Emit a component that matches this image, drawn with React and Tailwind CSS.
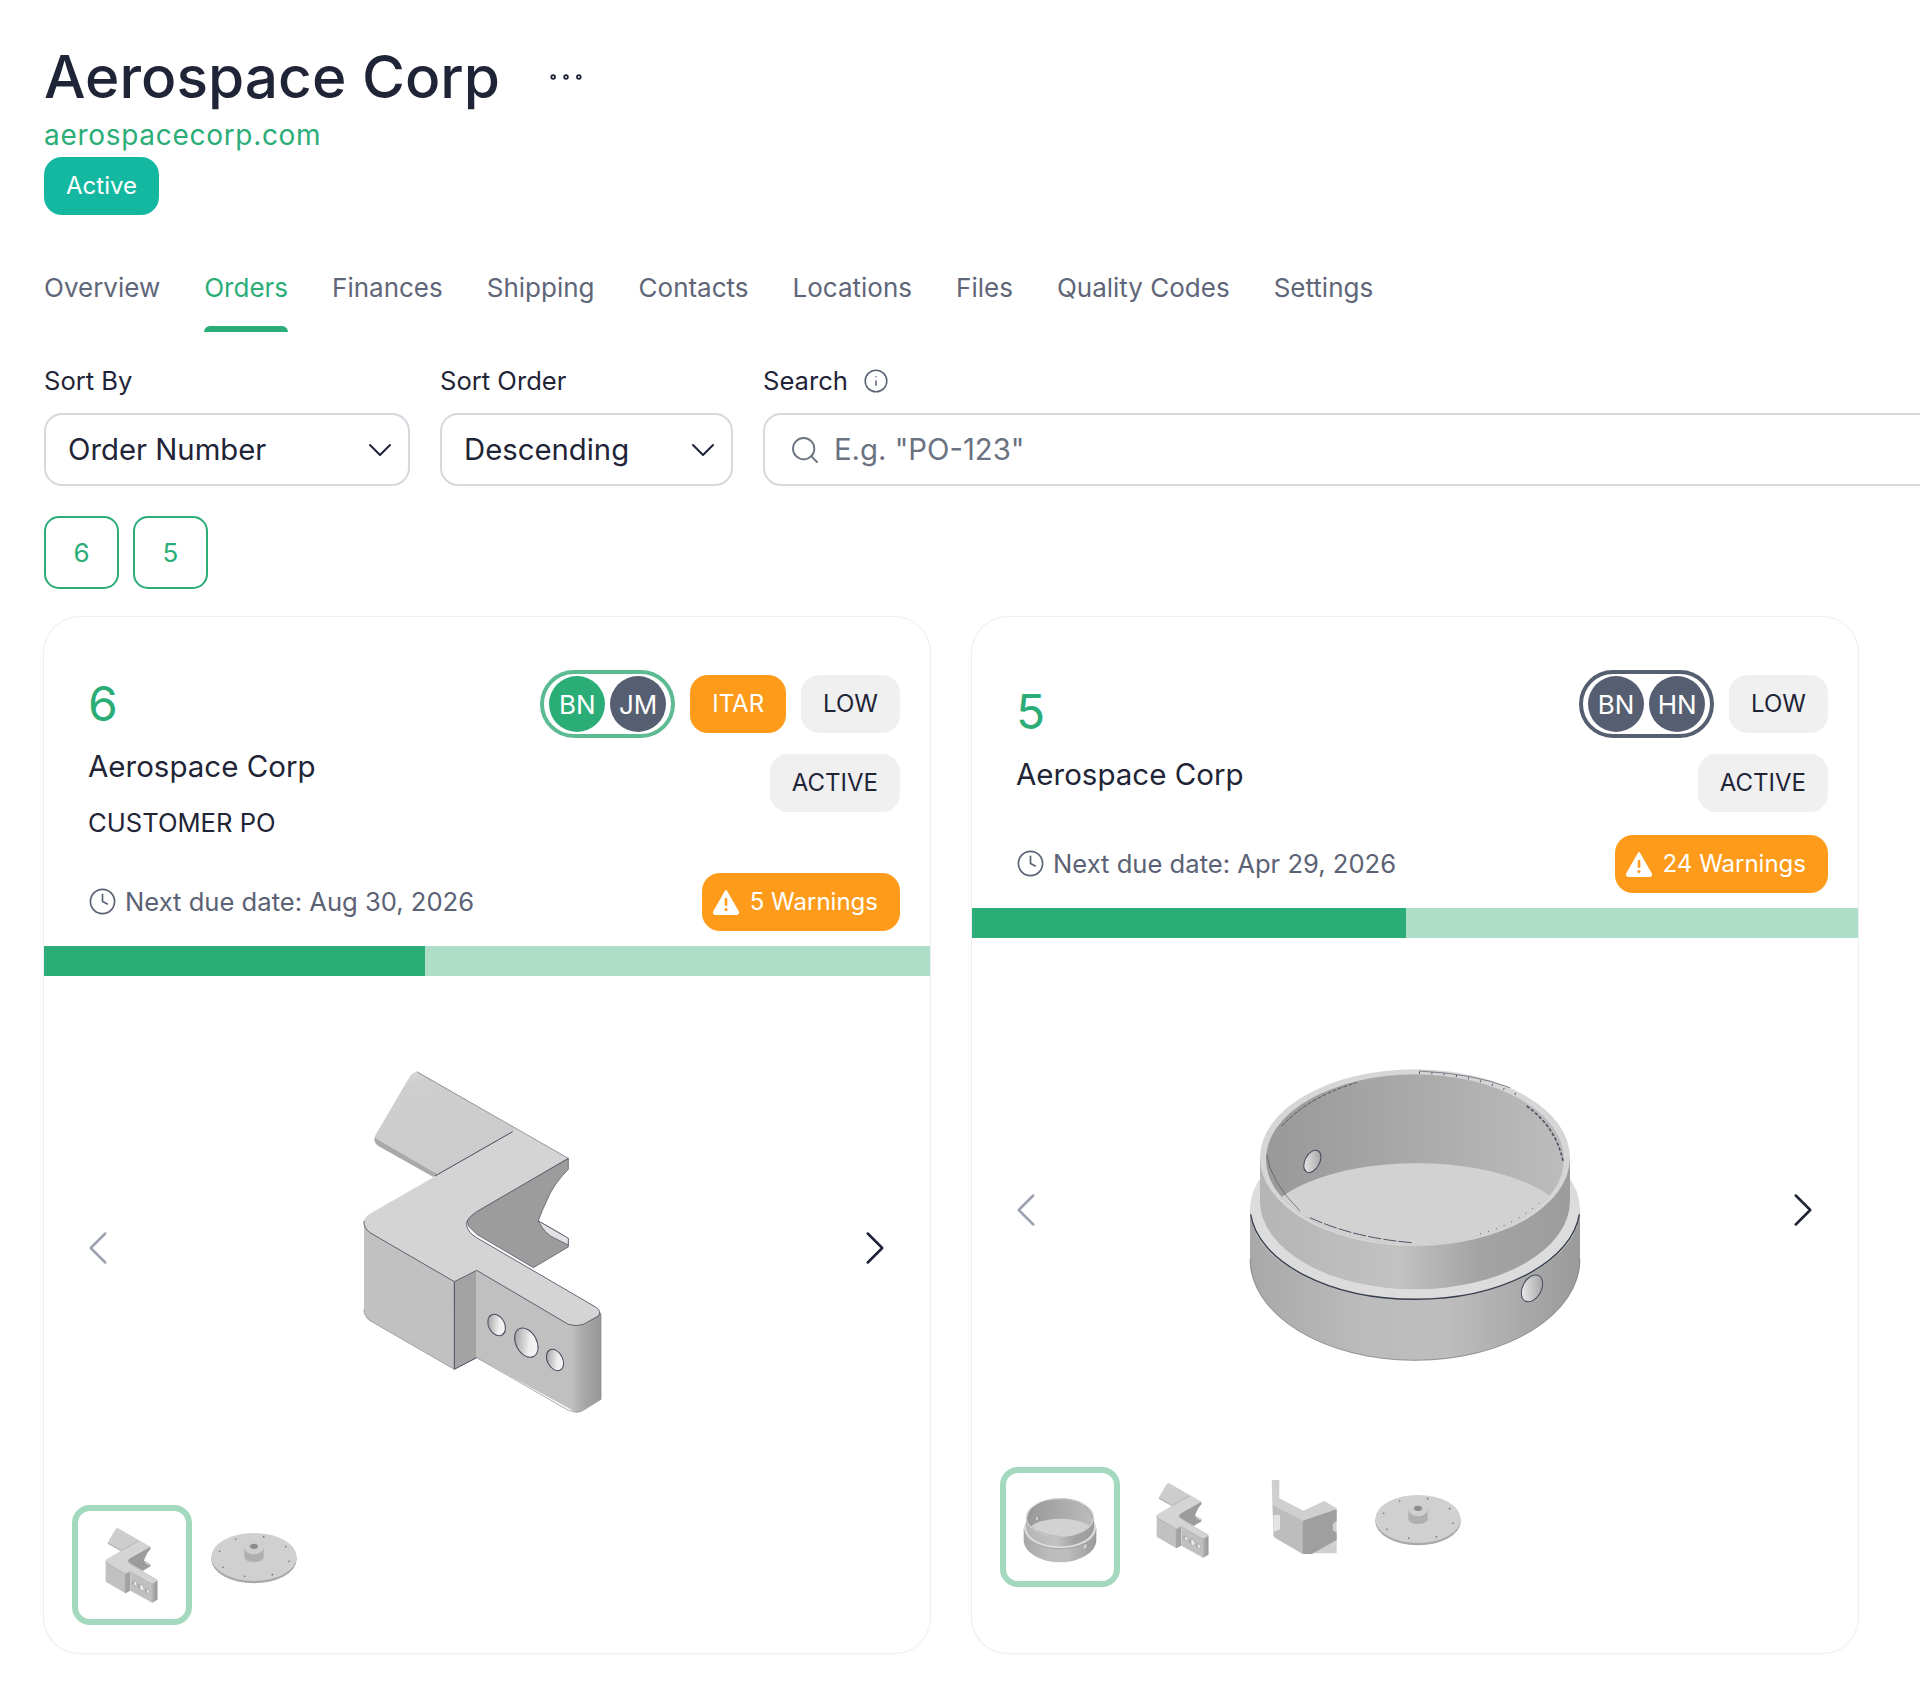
import { ChevronDown, ChevronLeft, ChevronRight, Clock, Ellipsis, Info, Search } from 'lucide-react'

const tabs = ['Overview', 'Orders', 'Finances', 'Shipping', 'Contacts', 'Locations', 'Files', 'Quality Codes', 'Settings']

const Badge = ({ children, className = '' }) => (
  <span className={`flex h-[58px] items-center rounded-[18px] px-[22px] text-[24px] ${className}`}>{children}</span>
)

const Avatar = ({ label, green }) => (
  <span className={`flex h-[56px] w-[56px] items-center justify-center rounded-full text-[26px] text-white ${green ? 'bg-[#2bad78]' : 'bg-[#565f72]'}`}>
    {label}
  </span>
)

const WarningIcon = () => (
  <svg width="28" height="26" viewBox="0 0 28 26">
    <path d="M14 2 L26 23 Q26.500 25 24.500 25 H3.500 Q1.500 25 2 23 Z" fill="#fff" stroke="#fff" strokeWidth="2" strokeLinejoin="round" />
    <rect x="12.700" y="9" width="2.600" height="8" rx="1" fill="#fe9b1b" />
    <circle cx="14" cy="20.500" r="1.600" fill="#fe9b1b" />
  </svg>
)

// isometric bracket, coordinates taken from the 3x crop
const PartShape = ({ width, height }) => (
  <svg width={width} height={height} viewBox="0 0 1002 1200">
    <defs>
      <linearGradient id="endFace" x1="0" y1="0" x2="1" y2="0">
        <stop offset="0" stopColor="#c2c2c2" />
        <stop offset="0.5" stopColor="#a6a6a6" />
        <stop offset="1" stopColor="#989898" />
      </linearGradient>
      <linearGradient id="holeFill" x1="0" y1="0" x2="1" y2="1">
        <stop offset="0" stopColor="#8f8f8f" />
        <stop offset="0.6" stopColor="#eeeeee" />
        <stop offset="1" stopColor="#fafafa" />
      </linearGradient>
      <linearGradient id="flangeFill" x1="0" y1="0" x2="0.4" y2="1">
        <stop offset="0" stopColor="#e0e0e0" />
        <stop offset="0.2" stopColor="#cecece" />
        <stop offset="1" stopColor="#cccccc" />
      </linearGradient>
    </defs>
    <path d="M272 102 Q285 88 298 95 L600 270 L345 405 L175 312 Q158 300 165 285 Z" fill="url(#flangeFill)" />
    <path d="M165 290 Q160 305 175 315 L340 408 L352 400 L180 300 Z" fill="#a9a9a9" />
    <path d="M745 352 L745 385 Q700 430 680 480 Q665 510 655 540 L700 565 L745 592 L745 618 L640 680 L470 580 L445 555 L440 525 Z" fill="#9c9c9c" stroke="#444c5c" strokeWidth="2" />
    <path d="M655 540 L745 592 L745 612 L705 592 Q675 580 655 540 Z" fill="#e2e2e2" stroke="#444c5c" strokeWidth="2" />
    <path d="M132 545 L403 722 V985 L148 838 Q132 825 132 805 Z" fill="#c1c1c1" />
    <path d="M403 722 L470 688 V950 L403 985 Z" fill="#a3a3a3" />
    <path d="M470 688 L760 855 L772 1116 L470 950 Z" fill="#c0c0c0" />
    <path d="M750 850 Q775 858 800 845 L843 815 V1075 L785 1110 Q770 1118 750 1105 Z" fill="url(#endFace)" />
    <path d="M578 272 L590 264 L745 352 L470 512 Q435 535 440 555 Q445 575 470 590 L830 800 Q845 812 835 825 L790 850 Q770 858 745 850 L470 688 L403 722 L150 575 Q130 560 132 540 Q135 525 155 515 Z" fill="#d4d4d4" />
    <path d="M745 352 L470 512 Q435 535 440 555 Q445 575 470 590 L830 800 Q845 812 835 825 L790 850 Q770 858 745 850 L470 688 L403 722 L150 575 Q130 560 132 540" fill="none" stroke="#444c5c" strokeWidth="2.500" strokeLinejoin="round" />
    <path d="M403 722 V985 L470 950 M578 272 L345 405" fill="none" stroke="#444c5c" strokeWidth="3" />
    <path d="M290 92 L745 352" fill="none" stroke="#666d7c" strokeWidth="2" />
    <path d="M132 805 Q132 825 148 838 L403 985 M470 950 L740 1105 Q770 1120 790 1108 L843 1075 V815" fill="none" stroke="#7c8290" strokeWidth="2" />
    <ellipse cx="530" cy="852" rx="24" ry="34" transform="rotate(-28 530 852)" fill="url(#holeFill)" stroke="#444c5c" strokeWidth="3" />
    <ellipse cx="619" cy="905" rx="31" ry="47" transform="rotate(-28 619 905)" fill="url(#holeFill)" stroke="#444c5c" strokeWidth="3" />
    <ellipse cx="705" cy="957" rx="23" ry="34" transform="rotate(-28 705 957)" fill="url(#holeFill)" stroke="#444c5c" strokeWidth="3" />
  </svg>
)

const RingShape = ({ width, height }) => (
  <svg width={width} height={height} viewBox="-15 -24 1200 1020">
    <defs>
      <linearGradient id="lowerWall" x1="0" y1="0" x2="1" y2="0">
        <stop offset="0" stopColor="#a8a8a8" />
        <stop offset="0.35" stopColor="#bcbcbc" />
        <stop offset="0.6" stopColor="#bdbdbd" />
        <stop offset="1" stopColor="#9a9a9a" />
      </linearGradient>
      <linearGradient id="upperWall" x1="0" y1="0" x2="1" y2="0">
        <stop offset="0" stopColor="#b5b5b5" />
        <stop offset="0.45" stopColor="#c2c2c2" />
        <stop offset="0.7" stopColor="#a4a4a4" />
        <stop offset="1" stopColor="#9c9c9c" />
      </linearGradient>
      <linearGradient id="innerWall" x1="0" y1="0" x2="1" y2="0">
        <stop offset="0" stopColor="#999999" />
        <stop offset="0.4" stopColor="#a6a6a6" />
        <stop offset="1" stopColor="#bcbcbc" />
      </linearGradient>
      <linearGradient id="ringHole" x1="0" y1="1" x2="1" y2="0">
        <stop offset="0" stopColor="#f4f4f4" />
        <stop offset="1" stopColor="#9a9a9a" />
      </linearGradient>
      <clipPath id="ringOpening">
        <ellipse cx="585" cy="355" rx="447" ry="255" />
      </clipPath>
    </defs>
    <path d="M90 500 V655 A495 303 0 0 0 1080 655 V500 Z" fill="url(#lowerWall)" />
    <path d="M90 655 A495 303 0 0 0 1080 655" fill="none" stroke="#6b7180" strokeWidth="2" />
    <ellipse cx="585" cy="505" rx="495" ry="270" fill="#dcdcdc" />
    <path d="M92 520 A495 280 0 0 0 1078 520" fill="none" stroke="#363d4d" strokeWidth="4" />
    <path d="M120 350 V480 A465 265 0 0 0 1050 480 V350 Z" fill="url(#upperWall)" />
    <ellipse cx="585" cy="350" rx="465" ry="265" fill="#d6d6d6" />
    <ellipse cx="585" cy="355" rx="447" ry="255" fill="url(#innerWall)" />
    <g clipPath="url(#ringOpening)">
      <ellipse cx="590" cy="565" rx="465" ry="198" fill="#d2d2d2" />
    </g>
    <ellipse cx="277" cy="361" rx="22" ry="36" transform="rotate(28 277 361)" fill="url(#ringHole)" stroke="#444c5c" strokeWidth="3" />
    <ellipse cx="936" cy="742" rx="28" ry="43" transform="rotate(28 936 742)" fill="url(#ringHole)" stroke="#444c5c" strokeWidth="3" />
    <path d="M185 255 Q270 165 410 125" fill="none" stroke="#4b5262" strokeWidth="3" strokeDasharray="12 5" />
    <path d="M597 95 Q760 98 900 165" fill="none" stroke="#4b5262" strokeWidth="6" strokeDasharray="3 34" />
    <path d="M597 90 Q760 98 870 140" fill="none" stroke="#4b5262" strokeWidth="2" />
    <path d="M920 195 Q1010 260 1030 365" fill="none" stroke="#4b5262" strokeWidth="5" strokeDasharray="10 6" />
    <path d="M140 340 Q150 420 240 510" fill="none" stroke="#4b5262" strokeWidth="2" />
    <path d="M270 530 Q400 590 575 605" fill="none" stroke="#4b5262" strokeWidth="3" strokeDasharray="40 6" />
    <path d="M780 578 Q880 555 965 480" fill="none" stroke="#4b5262" strokeWidth="3" strokeDasharray="3 22" />
  </svg>
)

const DiscShape = () => (
  <svg width="120" height="120" viewBox="1106 51 360 360">
    <ellipse cx="1283" cy="214" rx="128" ry="72" fill="#a9a9a9" />
    <ellipse cx="1283" cy="207" rx="128" ry="72" fill="#d0d0d0" />
    <path d="M1254 180 V208 A29 14 0 0 0 1312 208 V180 Z" fill="#afafaf" />
    <ellipse cx="1283" cy="178" rx="29" ry="21" fill="#cfcfcf" />
    <ellipse cx="1283" cy="175" rx="12" ry="8" fill="#8c8c8c" />
    <g fill="#6e7280">
      <circle cx="1180" cy="190" r="2.500" />
      <circle cx="1228" cy="153" r="2.500" />
      <circle cx="1312" cy="146" r="2.500" />
      <circle cx="1378" cy="176" r="2.500" />
      <circle cx="1388" cy="220" r="2.500" />
      <circle cx="1338" cy="260" r="2.500" />
      <circle cx="1255" cy="265" r="2.500" />
      <circle cx="1190" cy="238" r="2.500" />
    </g>
  </svg>
)

const BracketShape = () => (
  <svg width="113" height="120" viewBox="765 51 339 360" className="shrink-0">
    <path d="M845 90 H868 V145 L940 182 L1003 153 L1040 175 V310 H940 L850 258 Z" fill="#cfcfcf" />
    <path d="M848 165 L938 212 V312 L852 262 Z" fill="#bdbdbd" />
    <path d="M850 195 H870 V238 L850 245 Z" fill="#e4e4e4" />
    <path d="M938 212 L1040 178 V212 L1028 222 V240 L1040 248 V270 L965 312 H938 Z" fill="#9f9f9f" />
  </svg>
)

const OrderCard = ({ number, subtitle, due, warnings, progress, itar, avatars, ringGreen, main, thumbs, leftClass }) => (
  <div className="flex flex-col overflow-hidden rounded-[36px] bg-white shadow-[0_0_0_1px_#efeff0,0_1px_4px_rgba(0,0,0,0.04)]">
    <div className="flex items-start justify-between pl-[44px] pr-[30px] pt-[53px]">
      <div className={`flex flex-col ${leftClass}`}>
        <div className="text-[48px] leading-[66px] text-[#2bad78]">{number}</div>
        <div className="mt-[9px] text-[29.500px] leading-[40px] text-[#1f2437]">Aerospace Corp</div>
        {subtitle && <div className="mt-[17px] text-[25.600px] leading-[40px] text-[#1f2437]">{subtitle}</div>}
      </div>
      <div className="flex flex-col items-end gap-[16px]">
        <div className="flex items-center gap-[15px]">
          <div className={`flex h-[68px] items-center gap-[5px] rounded-full border-[4px] px-[5px] ${ringGreen ? 'border-[#5cbb92]' : 'border-[#565f72]'}`}>
            {avatars.map((a, i) => (
              <Avatar key={a} label={a} green={ringGreen && i === 0} />
            ))}
          </div>
          {itar && <Badge className="bg-[#fe9b1b] text-white">ITAR</Badge>}
          <Badge className="bg-[#f0f0f1] text-[#1f2437]">LOW</Badge>
        </div>
        <Badge className="bg-[#f0f0f1] text-[#1f2437]">ACTIVE</Badge>
      </div>
    </div>
    <div className="mt-[23px] flex items-center justify-between pl-[44px] pr-[30px]">
      <div className="flex items-center gap-[8px] text-[25.600px] text-[#5b6275]">
        <Clock size={29} strokeWidth={1.4} />
        {due}
      </div>
      <Badge className="gap-[10px] !pl-[10px] bg-[#fe9b1b] text-white">
        <WarningIcon />
        {warnings}
      </Badge>
    </div>
    <div className="mt-[15px] flex h-[30px] bg-[#aeddc8]">
      <div className={`h-full bg-[#2bad78] ${progress}`} />
    </div>
    <div className="relative flex h-[529px] items-center justify-center">
      <ChevronLeft size={58} strokeWidth={1.05} className="absolute left-[25px] top-[243px] text-[#9ca3af]" />
      {main}
      <ChevronRight size={58} strokeWidth={1.05} className="absolute right-[26px] top-[243px] text-[#1f2437]" />
    </div>
    <div className="flex gap-[3px] pb-[28px] pl-[28px]">{thumbs}</div>
  </div>
)

const ThumbActive = ({ children }) => (
  <div className="flex h-[120px] w-[120px] items-center justify-center rounded-[18px] border-[6px] border-[#a3d9bf]">{children}</div>
)

const ThumbPlain = ({ children, className = 'w-[120px]' }) => <div className={`flex h-[120px] justify-center ${className}`}>{children}</div>

export default function App() {
  return (
    <div className="h-[1702px] w-[1920px] overflow-hidden bg-white pl-[44px] pt-[41px] font-['Inter',sans-serif] text-[#1f2437]">
      <div className="flex h-[72px] items-center">
        <h1 className="text-[58.600px] font-medium leading-[72px]">Aerospace Corp</h1>
        <Ellipsis size={44} strokeWidth={1} className="ml-[44px]" />
      </div>
      <a className="mt-[2px] block h-[40px] text-[28px] leading-[40px] tracking-[0.7px] text-[#2bad78]">aerospacecorp.com</a>
      <div className="mt-[2px] flex h-[58px] w-[115px] items-center justify-center rounded-[18px] bg-[#14b8a0] text-[24px] text-white">Active</div>

      <div className="mt-[28px] flex gap-[44px]">
        {tabs.map((tab) => (
          <div key={tab} className={`relative flex h-[89px] items-center text-[26px] ${tab === 'Orders' ? 'text-[#2bad78]' : 'text-[#5f6679]'}`}>
            {tab}
            {tab === 'Orders' && <span className="absolute bottom-0 left-0 h-[6px] w-full rounded-t-[6px] bg-[#2bad78]" />}
          </div>
        ))}
      </div>

      <div className="mt-[31px] flex gap-[30px]">
        <div className="w-[366px] shrink-0">
          <label className="block text-[25.600px] leading-[36px]">Sort By</label>
          <div className="mt-[14px] flex h-[73px] items-center justify-between rounded-[18px] border-2 border-[#d8d9de] pl-[22px] pr-[8px] text-[29.300px]">
            Order Number
            <ChevronDown size={40} strokeWidth={1.2} />
          </div>
        </div>
        <div className="w-[293px] shrink-0">
          <label className="block text-[25.600px] leading-[36px]">Sort Order</label>
          <div className="mt-[14px] flex h-[73px] items-center justify-between rounded-[18px] border-2 border-[#d8d9de] pl-[22px] pr-[8px] text-[29.300px]">
            Descending
            <ChevronDown size={40} strokeWidth={1.2} />
          </div>
        </div>
        <div className="w-[1400px] shrink-0">
          <label className="flex items-center gap-[15px] text-[25.600px] leading-[36px]">
            Search
            <Info size={26} strokeWidth={1.4} className="text-[#5b6275]" />
          </label>
          <div className="mt-[14px] flex h-[73px] items-center gap-[13px] rounded-[18px] border-2 border-[#d8d9de] pl-[24px] text-[29.300px] text-[#6b7280]">
            <Search size={32} strokeWidth={1.4} />
            E.g. "PO-123"
          </div>
        </div>
      </div>

      <div className="mt-[30px] flex gap-[14px]">
        {['6', '5'].map((n) => (
          <div key={n} className="flex h-[73px] w-[75px] items-center justify-center rounded-[15px] border-2 border-[#2bad78] text-[26px] text-[#2bad78]">
            {n}
          </div>
        ))}
      </div>

      <div className="mt-[28px] grid w-[1814px] grid-cols-2 gap-[42px]">
        <OrderCard
          number="6"
          subtitle="CUSTOMER PO"
          due="Next due date: Aug 30, 2026"
          warnings="5 Warnings"
          progress="w-[43%]"
          itar
          ringGreen
          avatars={['BN', 'JM']}
          leftClass="pt-[1px] pb-[7px]"
          main={<PartShape width={334} height={400} />}
          thumbs={
            <>
              <ThumbActive>
                <PartShape width={73} height={88} />
              </ThumbActive>
              <ThumbPlain>
                <DiscShape />
              </ThumbPlain>
            </>
          }
        />
        <OrderCard
          number="5"
          due="Next due date: Apr 29, 2026"
          warnings="24 Warnings"
          progress="w-[49%]"
          avatars={['BN', 'HN']}
          leftClass="pt-[9px]"
          main={<RingShape width={400} height={340} />}
          thumbs={
            <>
              <ThumbActive>
                <RingShape width={88} height={75} />
              </ThumbActive>
              <ThumbPlain className="w-[120px] pt-[9px]">
                <PartShape width={73} height={88} />
              </ThumbPlain>
              <ThumbPlain className="w-[110px]">
                <BracketShape />
              </ThumbPlain>
              <ThumbPlain>
                <DiscShape />
              </ThumbPlain>
            </>
          }
        />
      </div>
    </div>
  )
}
